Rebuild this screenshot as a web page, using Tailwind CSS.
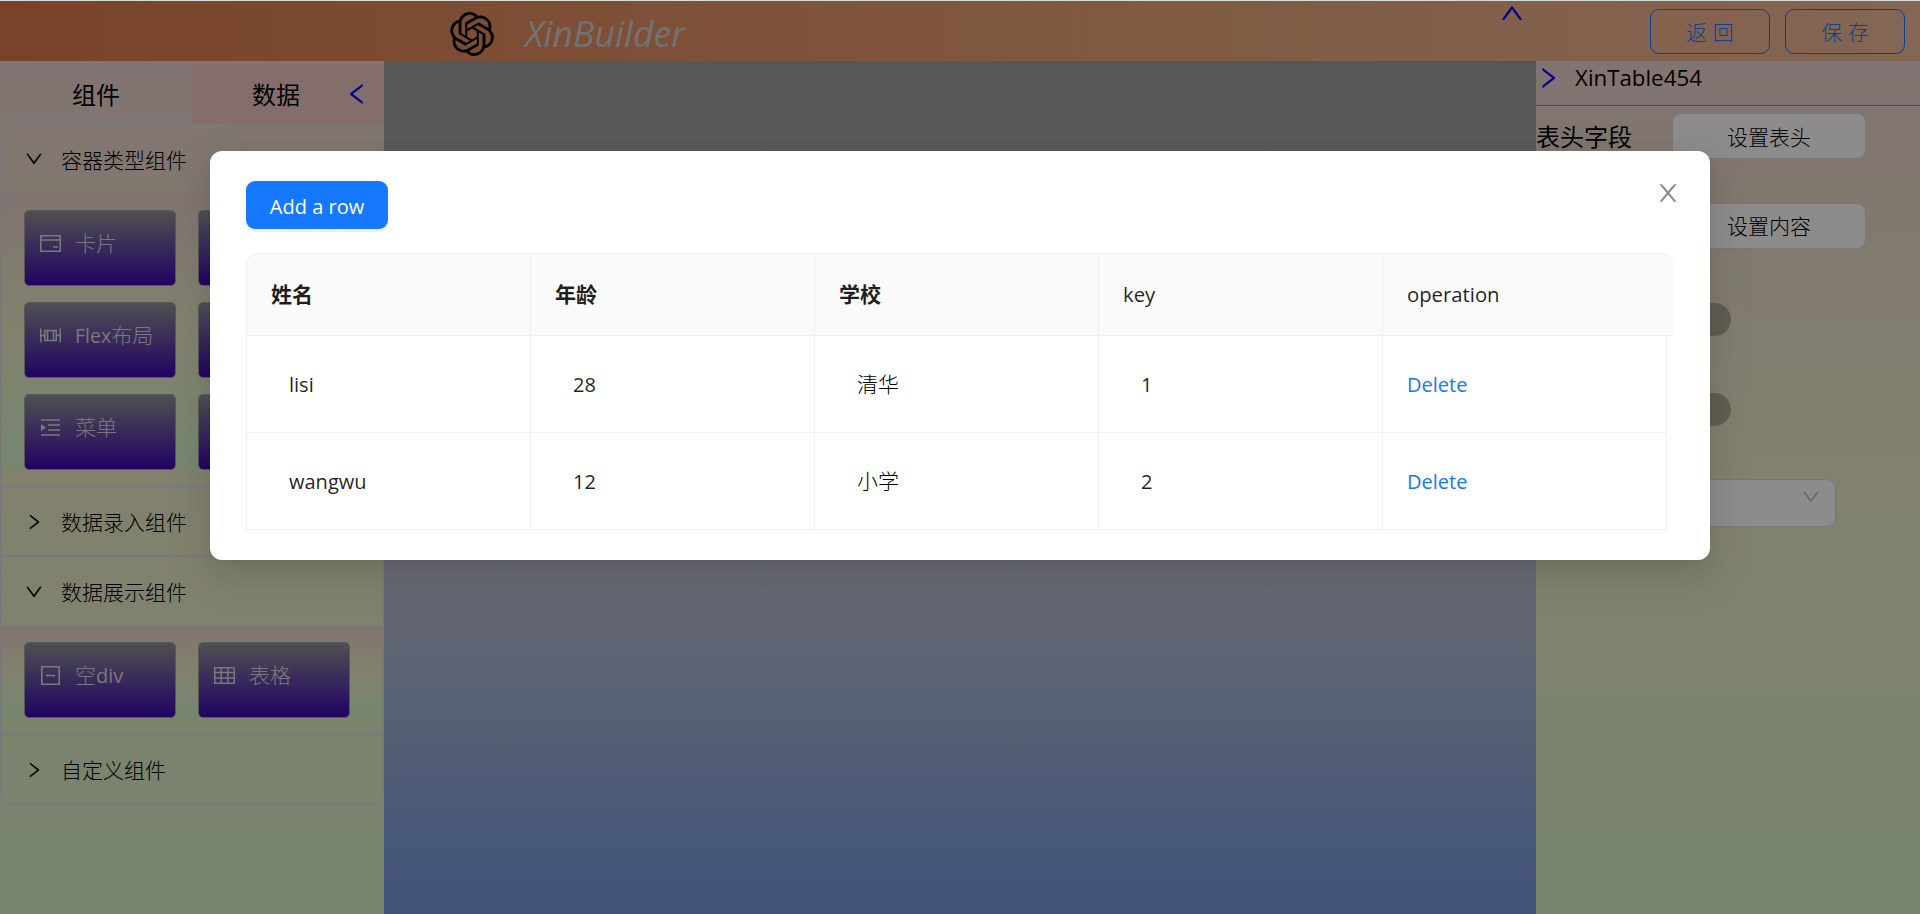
<!DOCTYPE html>
<html lang="zh-CN">
<head>
<meta charset="utf-8">
<title>XinBuilder</title>
<script src="https://cdn.jsdelivr.net/npm/@tailwindcss/browser@4"></script>
</head>
<body class="relative h-[914px] w-[1920px] overflow-hidden bg-white font-['Open_Sans','Noto_Sans_CJK_SC',sans-serif] text-[21px] leading-[33px] text-black">
<svg class="hidden">
  <symbol id="down" viewBox="64 64 896 896"><path d="M884 256h-75c-5.1 0-9.9 2.5-12.9 6.6L512 654.2 227.9 262.6c-3-4.1-7.8-6.6-12.9-6.6h-75c-6.5 0-10.3 7.4-6.5 12.7l352.6 486.1c12.8 17.6 39 17.6 51.7 0l352.6-486.1c3.9-5.3.1-12.7-6.4-12.7z"/></symbol>
  <symbol id="right" viewBox="64 64 896 896"><path d="M765.7 486.8L314.9 134.7A7.97 7.97 0 00302 141v77.3c0 4.9 2.3 9.6 6.1 12.6l360 281.1-360 281.1c-3.9 3-6.1 7.7-6.1 12.6V883c0 6.7 7.7 10.4 12.9 6.3l450.8-352.1a31.96 31.96 0 000-50.4z"/></symbol>
  <symbol id="left" viewBox="64 64 896 896"><path d="M724 218.3V141c0-6.7-7.7-10.4-12.9-6.3L260.3 486.8a31.86 31.86 0 000 50.3l450.8 352.1c5.3 4.1 12.9.4 12.9-6.3v-77.3c0-4.9-2.3-9.6-6.1-12.6l-360-281 360-281.1c3.8-3 6.1-7.7 6.1-12.6z"/></symbol>
  <symbol id="up" viewBox="64 64 896 896"><path d="M890.5 755.3L537.9 269.2c-12.8-17.6-39-17.6-51.7 0L133.5 755.3A8 8 0 00140 768h75c5.1 0 9.9-2.5 12.9-6.6L512 369.8l284.1 391.6c3 4.1 7.8 6.6 12.9 6.6h75c6.5 0 10.3-7.4 6.5-12.7z"/></symbol>
  <symbol id="close" viewBox="64 64 896 896"><path d="M563.8 512l262.5-312.9c4.4-5.2.7-13.1-6.1-13.1h-79.8c-4.7 0-9.2 2.1-12.3 5.7L511.6 449.8 295.1 191.7c-3-3.6-7.5-5.7-12.3-5.7H203c-6.8 0-10.5 7.9-6.1 13.1L459.4 512 196.9 824.9A7.95 7.95 0 00203 838h79.8c4.7 0 9.2-2.1 12.3-5.7l216.5-258.1 216.5 258.1c3 3.6 7.5 5.7 12.3 5.7h79.8c6.8 0 10.5-7.9 6.1-13.1L563.8 512z"/></symbol>
</svg>

<div class="flex h-full flex-col pt-px">
  <header class="flex h-[60px] shrink-0 items-center bg-linear-to-r/srgb from-[#dc7a4c] via-[#e89e70] to-[#f0bb9b] pr-[15px]">
    <svg class="ml-[450px] mt-[6px] size-[44px]" viewBox="0 0 24 24"><path d="M22.2819 9.8211a5.9847 5.9847 0 0 0-.5157-4.9108 6.0462 6.0462 0 0 0-6.5098-2.9A6.0651 6.0651 0 0 0 4.9807 4.1818a5.9847 5.9847 0 0 0-3.9977 2.9 6.0462 6.0462 0 0 0 .7427 7.0966 5.98 5.98 0 0 0 .511 4.9107 6.051 6.051 0 0 0 6.5146 2.9001A5.9847 5.9847 0 0 0 13.2599 24a6.0557 6.0557 0 0 0 5.7718-4.2058 5.9894 5.9894 0 0 0 3.9977-2.9001 6.0557 6.0557 0 0 0-.7475-7.0729zm-9.022 12.6081a4.4755 4.4755 0 0 1-2.8764-1.0408l.1419-.0804 4.7783-2.7582a.7948.7948 0 0 0 .3927-.6813v-6.7369l2.02 1.1686a.071.071 0 0 1 .038.052v5.5826a4.504 4.504 0 0 1-4.4945 4.4944zm-9.6607-4.1254a4.4708 4.4708 0 0 1-.5346-3.0137l.142.0852 4.783 2.7582a.7712.7712 0 0 0 .7806 0l5.8428-3.3685v2.3324a.0804.0804 0 0 1-.0332.0615L9.74 19.9502a4.4992 4.4992 0 0 1-6.1408-1.6464zM2.3408 7.8956a4.485 4.485 0 0 1 2.3655-1.9728V11.6a.7664.7664 0 0 0 .3879.6765l5.8144 3.3543-2.0201 1.1685a.0757.0757 0 0 1-.071 0l-4.8303-2.7865A4.504 4.504 0 0 1 2.3408 7.872zm16.5963 3.8558L13.1038 8.364 15.1192 7.2a.0757.0757 0 0 1 .071 0l4.8303 2.7913a4.4944 4.4944 0 0 1-.6765 8.1042v-5.6772a.79.79 0 0 0-.407-.667zm2.0107-3.0231l-.142-.0852-4.7735-2.7818a.7759.7759 0 0 0-.7854 0L9.409 9.2297V6.8974a.0662.0662 0 0 1 .0284-.0615l4.8303-2.7866a4.4992 4.4992 0 0 1 6.6802 4.66zM8.3065 12.863l-2.02-1.1638a.0804.0804 0 0 1-.038-.0567V6.0742a4.4992 4.4992 0 0 1 7.3757-3.4537l-.142.0805L8.704 5.459a.7948.7948 0 0 0-.3927.6813zm1.0976-2.3654l2.602-1.4998 2.6069 1.4998v2.9994l-2.5974 1.4997-2.6067-1.4997Z"/></svg>
    <span class="ml-[31px] mt-[3px] w-[170px] text-[35.6px] leading-[50px] italic text-[#d0d0d2]">XinBuilder</span>
    <svg class="mb-[36px] ml-[805px] size-6 fill-[#0000ff]"><use href="#up"/></svg>
    <button class="ml-auto h-[45px] w-[120px] rounded-[9px] border border-[#1677ff] pt-[3px] font-light text-[#1677ff]">返 回</button>
    <button class="ml-[15px] h-[45px] w-[120px] rounded-[9px] border border-[#1677ff] pt-[3px] font-light text-[#1677ff]">保 存</button>
  </header>

  <div class="flex flex-1">
    <aside class="flex w-[384px] flex-col bg-linear-to-b/srgb from-[#ecd3cf] via-[#ececc8] to-[#d8f0c6]">
      <div class="grid h-[63px] grid-cols-[192px_192px] text-2xl">
        <div class="flex items-center justify-center pt-[5px]">组件</div>
        <div class="mt-[3px] flex items-center bg-[#f1c8c5] pl-[60px] pt-[2px]">数据
          <svg class="mb-[2px] ml-[45px] size-6 fill-[#0000ff]"><use href="#left"/></svg>
        </div>
      </div>
      <div class="flex h-[681px] flex-col overflow-hidden rounded-xl border border-[#d9d9dd]">
        <div class="flex h-[68px] items-center gap-[18px] pl-6"><svg class="size-[18px]"><use href="#down"/></svg><span class="mt-[3px] font-light">容器类型组件</span></div>
        <div class="h-[293px] border-t border-[#d9d9dd]">
          <div class="grid h-[276px] grid-cols-[152px_152px] grid-rows-[76px_76px_76px] content-end gap-x-[22px] gap-y-4 bg-linear-to-b/srgb from-[#ecd3cf] via-[#ececc8] to-[#d6f5ca] pl-[23px] font-light text-[#dedade]">
            <div class="flex gap-[14px] rounded-[5px] border border-[#a2a0a2] bg-linear-to-b/srgb from-[#909396] to-[#3e06b2] pl-[15px] pt-[16px]">
              <svg class="mt-[6px] size-[21px] fill-none stroke-current stroke-[1.5]" viewBox="0 0 21 21"><path d="M.75 2.75h19.5v15.5H.75zM.75 7h19.5M13 14h5" /></svg>卡片</div>
            <div class="rounded-[5px] border border-[#a2a0a2] bg-linear-to-b/srgb from-[#909396] to-[#3e06b2]"></div>
            <div class="flex gap-[14px] rounded-[5px] border border-[#a2a0a2] bg-linear-to-b/srgb from-[#909396] to-[#3e06b2] pl-[15px] pt-[16px]">
              <svg class="mt-[6px] size-[21px] fill-none stroke-current stroke-[1.5]" viewBox="0 0 21 21"><path d="M.75 3.5v14M20.25 3.5v14M4.75 5.5h11.5v10H4.75zM7.5 5.5v10M13.5 5.5v10M1 10.5h3.5M16.5 10.5H20"/></svg><span><span class="text-[19.5px] font-normal">Flex</span>布局</span></div>
            <div class="rounded-[5px] border border-[#a2a0a2] bg-linear-to-b/srgb from-[#909396] to-[#3e06b2]"></div>
            <div class="flex gap-[14px] rounded-[5px] border border-[#a2a0a2] bg-linear-to-b/srgb from-[#909396] to-[#3e06b2] pl-[15px] pt-[16px]">
              <svg class="mt-[6px] size-[21px] fill-none stroke-current stroke-[1.6]" viewBox="0 0 21 21"><path d="M1 3h19M8 8h12M8 13h12M1 18h19"/><path class="fill-current stroke-none" d="M1 7l5 3.6-5 3.6z"/></svg>菜单</div>
            <div class="rounded-[5px] border border-[#a2a0a2] bg-linear-to-b/srgb from-[#909396] to-[#3e06b2]"></div>
          </div>
        </div>
        <div class="flex h-[70px] items-center gap-[18px] border-t border-[#d9d9dd] pl-6"><svg class="size-[18px]"><use href="#right"/></svg><span class="mt-px font-light">数据录入组件</span></div>
        <div class="flex h-[70px] items-center gap-[18px] border-t border-[#d9d9dd] pl-6"><svg class="size-[18px]"><use href="#down"/></svg><span class="mt-px font-light">数据展示组件</span></div>
        <div class="h-[108px] border-t border-[#d9d9dd]">
          <div class="grid h-[91px] grid-cols-[152px_152px] grid-rows-[76px] content-end gap-x-[22px] bg-linear-to-b/srgb from-[#ecd3cf] via-[#ececc8] to-[#d6f5ca] pl-[23px] font-light text-[#dedade]">
            <div class="flex gap-[14px] rounded-[5px] border border-[#a2a0a2] bg-linear-to-b/srgb from-[#909396] to-[#3e06b2] pl-[15px] pt-[16px]">
              <svg class="mt-[6px] size-[21px] fill-none stroke-current stroke-[1.6]" viewBox="0 0 21 21"><path d="M1.8 1.8h17.4v17.4H1.8zM6 10.5h9"/></svg><span>空<span class="text-[20px] font-normal">div</span></span></div>
            <div class="flex gap-[14px] rounded-[5px] border border-[#a2a0a2] bg-linear-to-b/srgb from-[#909396] to-[#3e06b2] pl-[15px] pt-[16px]">
              <svg class="mt-[6px] size-[21px] fill-none stroke-current stroke-[1.5]" viewBox="0 0 21 21"><path d="M.75 2.75h19.5v15.5H.75zM.75 7.5h19.5M.75 13h19.5M7.2 3v15M13.8 3v15"/></svg>表格</div>
          </div>
        </div>
        <div class="flex h-[70px] items-center gap-[18px] border-t border-[#d9d9dd] pl-6"><svg class="size-[18px]"><use href="#right"/></svg><span class="mt-px font-light">自定义组件</span></div>
      </div>
    </aside>

    <main class="flex-1 bg-linear-to-b/srgb from-[#9d9d9d] via-[#c0c1ce] via-58% to-[#7498de]"></main>

    <aside class="flex w-[384px] flex-col bg-linear-to-b/srgb from-[#ecd3cf] via-[#ececc8] to-[#d8f0c6]">
      <div class="flex h-[45px] shrink-0 items-start gap-[15px] border-b border-[#84868c] text-[22.3px] shadow-[0_1px_0_#e2e2e4]">
        <svg class="mt-[5px] size-6 fill-[#0000ff]"><use href="#right"/></svg>XinTable454
      </div>
      <div class="mt-px flex h-[58px] items-center text-2xl"><span class="w-[136px] pt-px">表头字段</span>
        <button class="h-[46px] w-[194px] rounded-[9px] border border-[#d9d9d9] bg-white pt-px text-[21px] font-light">设置表头</button></div>
      <div class="mt-[32px] flex h-[58px] items-center pl-[136px]">
        <button class="h-[46px] w-[194px] rounded-[9px] border border-[#d9d9d9] bg-white pt-px font-light">设置内容</button></div>
      <div class="ml-[129px] mt-[48px] h-[33px] w-[66px] rounded-full bg-black/25"></div>
      <div class="ml-[129px] mt-[57px] h-[33px] w-[66px] rounded-full bg-black/25"></div>
      <div class="ml-[136px] mt-[53px] flex h-[48px] w-[164px] justify-end rounded-[9px] border border-[#d9d9d9] bg-white pr-[15px] pt-[8px]"><svg class="size-[18px] fill-black/25"><use href="#down"/></svg></div>
    </aside>
  </div>
</div>

<div class="absolute inset-x-0 bottom-0 top-px bg-black/45"></div>
<div class="absolute inset-x-0 top-0 h-px bg-[#d5dedb]"></div>

<section class="absolute left-[210px] top-[151px] flex h-[409px] w-[1500px] flex-col rounded-xl bg-white px-9 pt-[30px] text-black/88 shadow-[0_9px_24px_0_rgba(0,0,0,0.08),0_4px_9px_-6px_rgba(0,0,0,0.12),0_13px_42px_12px_rgba(0,0,0,0.05)]">
  <div class="flex justify-between">
    <button class="h-12 w-[142px] rounded-[9px] bg-[#1677ff] pt-[2px] text-[20px] text-white shadow-[0_3px_0_rgba(5,145,255,0.1)]">Add a row</button>
    <svg class="-mr-[6px] size-6 fill-black/45"><use href="#close"/></svg>
  </div>
  <div class="mt-6 grid h-[83px] w-[1428px] grid-cols-[284px_284px_284px_284px_291px] rounded-t-xl border-y border-l border-[#f0f0f0] bg-[#fafafa] text-[20.3px]">
    <div class="flex items-center border-r border-[#f0f0f0] pl-6 text-[21px] font-bold">姓名</div>
    <div class="flex items-center border-r border-[#f0f0f0] pl-6 text-[21px] font-bold">年龄</div>
    <div class="flex items-center border-r border-[#f0f0f0] pl-6 text-[21px] font-bold">学校</div>
    <div class="flex items-center border-r border-[#f0f0f0] pl-6 font-medium">key</div>
    <div class="flex items-center pl-6 font-medium">operation</div>
  </div>
  <div class="grid h-[97px] w-[1421px] grid-cols-[284px_284px_284px_284px_284px] border-b border-l border-[#f0f0f0] text-[20px]">
    <div class="flex items-center border-r border-[#f0f0f0] pl-[42px]">lisi</div>
    <div class="flex items-center border-r border-[#f0f0f0] pl-[42px]">28</div>
    <div class="flex items-center border-r border-[#f0f0f0] pl-[42px] text-[21px] font-light text-black">清华</div>
    <div class="flex items-center border-r border-[#f0f0f0] pl-[42px]">1</div>
    <div class="flex items-center border-r border-[#f0f0f0] pl-6 text-[#1677ff]">Delete</div>
  </div>
  <div class="grid h-[97px] w-[1421px] grid-cols-[284px_284px_284px_284px_284px] border-b border-l border-[#f0f0f0] text-[20px]">
    <div class="flex items-center border-r border-[#f0f0f0] pl-[42px]">wangwu</div>
    <div class="flex items-center border-r border-[#f0f0f0] pl-[42px]">12</div>
    <div class="flex items-center border-r border-[#f0f0f0] pl-[42px] text-[21px] font-light text-black">小学</div>
    <div class="flex items-center border-r border-[#f0f0f0] pl-[42px]">2</div>
    <div class="flex items-center border-r border-[#f0f0f0] pl-6 text-[#1677ff]">Delete</div>
  </div>
</section>
</body>
</html>
